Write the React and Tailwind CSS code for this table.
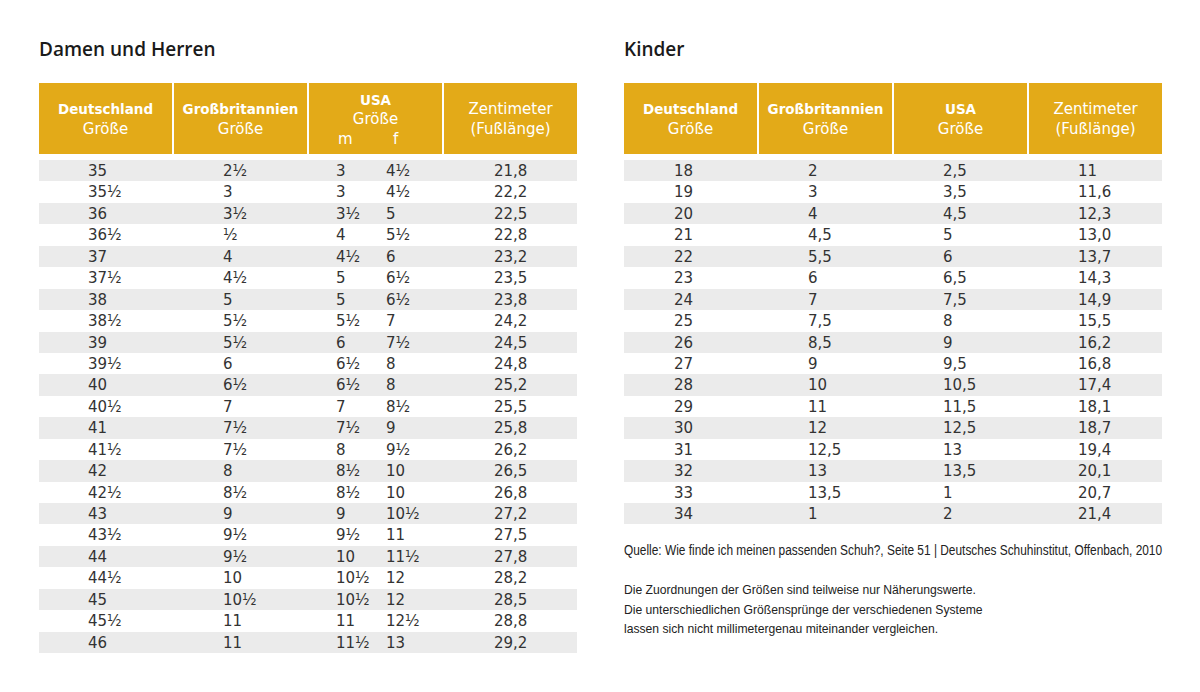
import React from "react";

const damenRows = [
    ["35", "2½", "3", "4½", "21,8"],
    ["35½", "3", "3", "4½", "22,2"],
    ["36", "3½", "3½", "5", "22,5"],
    ["36½", "½", "4", "5½", "22,8"],
    ["37", "4", "4½", "6", "23,2"],
    ["37½", "4½", "5", "6½", "23,5"],
    ["38", "5", "5", "6½", "23,8"],
    ["38½", "5½", "5½", "7", "24,2"],
    ["39", "5½", "6", "7½", "24,5"],
    ["39½", "6", "6½", "8", "24,8"],
    ["40", "6½", "6½", "8", "25,2"],
    ["40½", "7", "7", "8½", "25,5"],
    ["41", "7½", "7½", "9", "25,8"],
    ["41½", "7½", "8", "9½", "26,2"],
    ["42", "8", "8½", "10", "26,5"],
    ["42½", "8½", "8½", "10", "26,8"],
    ["43", "9", "9", "10½", "27,2"],
    ["43½", "9½", "9½", "11", "27,5"],
    ["44", "9½", "10", "11½", "27,8"],
    ["44½", "10", "10½", "12", "28,2"],
    ["45", "10½", "10½", "12", "28,5"],
    ["45½", "11", "11", "12½", "28,8"],
    ["46", "11", "11½", "13", "29,2"],
];

const kinderRows = [
    ["18", "2", "2,5", "11"],
    ["19", "3", "3,5", "11,6"],
    ["20", "4", "4,5", "12,3"],
    ["21", "4,5", "5", "13,0"],
    ["22", "5,5", "6", "13,7"],
    ["23", "6", "6,5", "14,3"],
    ["24", "7", "7,5", "14,9"],
    ["25", "7,5", "8", "15,5"],
    ["26", "8,5", "9", "16,2"],
    ["27", "9", "9,5", "16,8"],
    ["28", "10", "10,5", "17,4"],
    ["29", "11", "11,5", "18,1"],
    ["30", "12", "12,5", "18,7"],
    ["31", "12,5", "13", "19,4"],
    ["32", "13", "13,5", "20,1"],
    ["33", "13,5", "1", "20,7"],
    ["34", "1", "2", "21,4"],
];

const dataFont = "[font-family:'DejaVu_Sans',Verdana,sans-serif]";

export default function App() {
    return (
        <div className="w-[1200px] h-[692px] bg-white flex gap-[47px] pl-[39px] pt-[35px] text-[#333] overflow-hidden">
            {/* DAMEN UND HERREN */}
            <div className="w-[538px] shrink-0">
                <Title>Damen und Herren</Title>
                <div className={`grid grid-cols-4 gap-x-[2px] h-[71px] ${dataFont}`}>
                    <HeadCell bold="Deutschland" sub="Größe" />
                    <HeadCell bold="Großbritannien" sub="Größe" />
                    <div className="bg-[#e3aa18] text-white flex flex-col justify-center pt-[3px]">
                        <div className="text-center font-bold text-[13.5px] leading-[19px]">USA</div>
                        <div className="text-center text-[15px] leading-[19px]">Größe</div>
                        <div className="text-[15px] leading-[21px] pl-[29px] flex">
                            <span className="w-[55px]">m</span>
                            <span>f</span>
                        </div>
                    </div>
                    <HeadCell sub="Zentimeter" sub2="(Fußlänge)" />
                </div>
                <div className={`mt-[6px] ${dataFont} text-[15px]`}>
                    {damenRows.map((r, i) => (
                        <div
                            key={i}
                            className={`grid grid-cols-4 gap-x-[2px] h-[21.45px] items-center ${
                                i % 2 === 0 ? "bg-[#ebebeb]" : "bg-white"
                            }`}
                        >
                            <div className="pl-[49px]">{r[0]}</div>
                            <div className="pl-[49px]">{r[1]}</div>
                            <div className="pl-[27px] flex">
                                <span className="w-[50px]">{r[2]}</span>
                                <span>{r[3]}</span>
                            </div>
                            <div className="pl-[50px]">{r[4]}</div>
                        </div>
                    ))}
                </div>
            </div>

            {/* KINDER */}
            <div className="w-[538px] shrink-0">
                <Title>Kinder</Title>
                <div className={`grid grid-cols-4 gap-x-[2px] h-[71px] ${dataFont}`}>
                    <HeadCell bold="Deutschland" sub="Größe" />
                    <HeadCell bold="Großbritannien" sub="Größe" />
                    <HeadCell bold="USA" sub="Größe" />
                    <HeadCell sub="Zentimeter" sub2="(Fußlänge)" />
                </div>
                <div className={`mt-[6px] ${dataFont} text-[15px]`}>
                    {kinderRows.map((r, i) => (
                        <div
                            key={i}
                            className={`grid grid-cols-4 gap-x-[2px] h-[21.45px] items-center ${
                                i % 2 === 0 ? "bg-[#ebebeb]" : "bg-white"
                            }`}
                        >
                            <div className="pl-[50px]">{r[0]}</div>
                            <div className="pl-[49px]">{r[1]}</div>
                            <div className="pl-[49px]">{r[2]}</div>
                            <div className="pl-[49px]">{r[3]}</div>
                        </div>
                    ))}
                </div>

                {/* narrow source line, squeezed like the condensed print font */}
                <p className="mt-[17px] text-[14px] leading-[18px] text-[#222] whitespace-nowrap w-max origin-left scale-x-[0.849] [font-family:'Liberation_Sans',Arial,sans-serif]">
                    Quelle: Wie finde ich meinen passenden Schuh?, Seite 51 | Deutsches Schuhinstitut, Offenbach, 2010
                </p>
                <p className="mt-[21px] text-[13.5px] leading-[19.5px] text-[#222] whitespace-nowrap w-max origin-left scale-x-[0.9] [font-family:'Liberation_Sans',Arial,sans-serif]">
                    Die Zuordnungen der Größen sind teilweise nur Näherungswerte.
                    <br />
                    Die unterschiedlichen Größensprünge der verschiedenen Systeme
                    <br />
                    lassen sich nicht millimetergenau miteinander vergleichen.
                </p>
            </div>
        </div>
    );
}

/* ================== SMALL COMPONENTS ================== */

function Title({ children }) {
    return (
        <h2 className="text-[19px] leading-[28px] font-semibold text-[#1a1a1a] mb-[20px] [font-family:'Open_Sans',sans-serif]">
            {children}
        </h2>
    );
}

function HeadCell({ bold, sub, sub2 }) {
    return (
        <div className="bg-[#e3aa18] text-white flex flex-col items-center justify-center text-center">
            {bold && <div className="font-bold text-[13.5px] leading-[20px]">{bold}</div>}
            <div className="text-[15px] leading-[20px]">{sub}</div>
            {sub2 && <div className="text-[15px] leading-[20px]">{sub2}</div>}
        </div>
    );
}
